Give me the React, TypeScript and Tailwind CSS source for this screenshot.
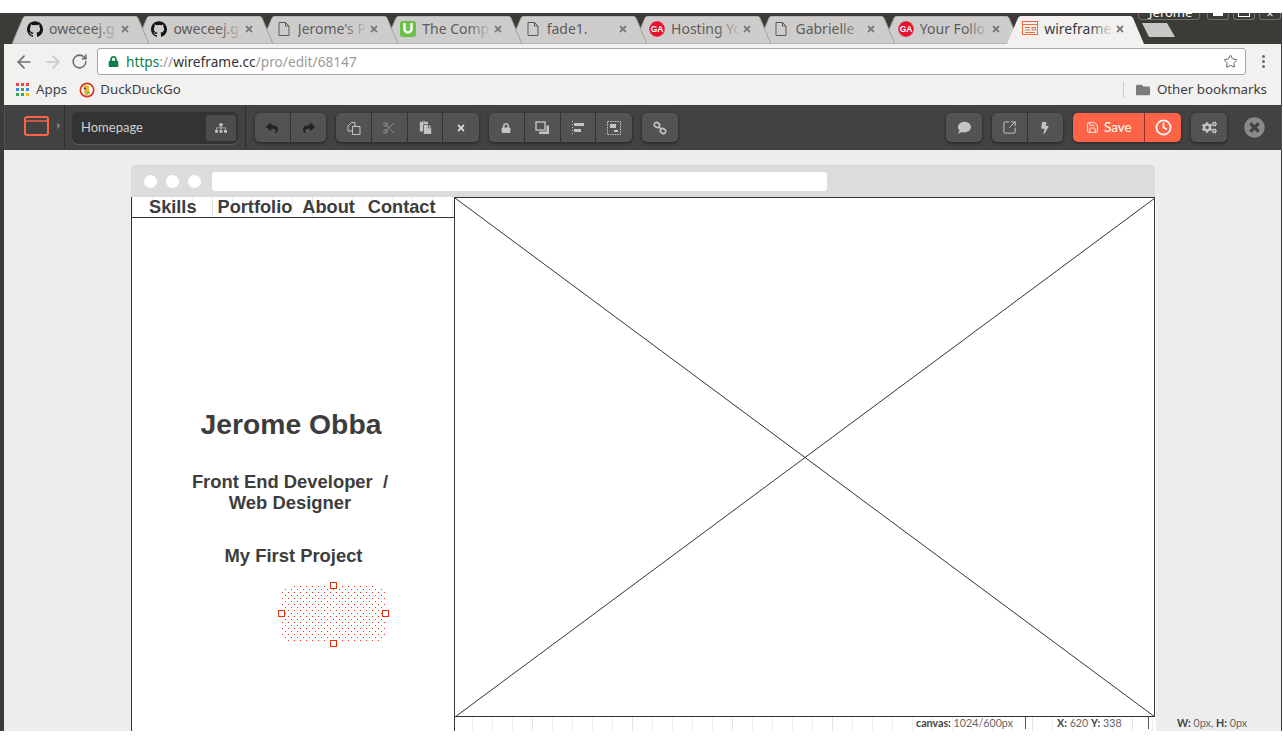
import React from "react";
import {
  ArrowLeft,
  ArrowRight,
  RotateCw,
  Star,
  Scissors,
  SquareArrowOutUpRight,
  Save,
  Clock,
} from "lucide-react";
import {
  FaReply,
  FaShare,
  FaPaste,
  FaTimes,
  FaLock,
  FaSitemap,
  FaComment,
  FaBolt,
  FaCogs,
  FaTimesCircle,
  FaFolder,
  FaCaretRight,
} from "react-icons/fa";
import { SiGithub } from "react-icons/si";

const PageIcon = () => (
  <svg width="16" height="16" viewBox="0 0 16 16" fill="none" stroke="#5a5a5a" strokeWidth="1">
    <path d="M3 1.5h6.5l3.5 3.5v9.5H3z" />
    <path d="M9.5 1.5V5H13" />
  </svg>
);

const GaIcon = () => (
  <svg width="16" height="16" viewBox="0 0 16 16">
    <circle cx="8" cy="8" r="7.4" fill="#e8112d" stroke="#e8112d" strokeWidth="1.2" strokeDasharray="1 1" />
    <text x="8" y="11" fontSize="8.5" fontWeight="700" textAnchor="middle" fill="#fff" fontFamily="Liberation Sans, sans-serif">
      GA
    </text>
  </svg>
);

const UptimeIcon = () => (
  <div className="w-4 h-4 rounded-[3px] bg-[#6cc04a] flex items-center justify-center">
    <svg width="10" height="11" viewBox="0 0 10 11" fill="none" stroke="#fff" strokeWidth="2.4">
      <path d="M1.5 0v6a3.5 3.5 0 0 0 7 0V0" />
    </svg>
  </div>
);

const WireframeIcon = () => (
  <svg width="16" height="15" viewBox="0 0 16 15" fill="none" stroke="#f0683c" strokeWidth="1">
    <rect x="0.5" y="0.5" width="15" height="13" />
    <path d="M0.5 3.5h15M3 6.5h5M3 9h5M3 11.5h10M10 6.5h3.5v2.5H10z" />
  </svg>
);

const tabs = [
  { title: "oweceej.g", icon: <SiGithub size={16} color="#161514" /> },
  { title: "oweceej.g", icon: <SiGithub size={16} color="#161514" /> },
  { title: "Jerome's P", icon: <PageIcon /> },
  { title: "The Comp", icon: <UptimeIcon /> },
  { title: "fade1.", icon: <PageIcon /> },
  { title: "Hosting Yo", icon: <GaIcon /> },
  { title: "Gabrielle", icon: <PageIcon /> },
  { title: "Your Follo", icon: <GaIcon /> },
  { title: "wireframe", icon: <WireframeIcon />, active: true },
];

const Tab = ({ title, icon, active, z }: { title: string; icon: React.ReactNode; active?: boolean; z: number }) => (
  <div
    className="relative w-[137px] h-[28px] shrink-0 -mr-[12.6px] flex items-center pl-[15px] pr-[19px] pb-[3px]"
    style={{ zIndex: z }}
  >
    <svg width="137" height="28" viewBox="0 0 137 28" className="absolute left-0 top-0">
      <path
        d="M0 28 L11 2 Q12 0 14 0 H123 Q125 0 126 2 L137 28 Z"
        fill={active ? "#f2f1f0" : "#cfcdcb"}
        stroke={active ? "none" : "#a3a19f"}
      />
    </svg>
    <div className="relative w-4 shrink-0 flex justify-center">{icon}</div>
    <div className={`relative ml-[6px] w-[70px] overflow-hidden whitespace-nowrap text-[14px] ${active ? "text-[#3c3c3c]" : "text-[#5c5c5c]"}`}>
      {title}
      <div className={`absolute right-0 top-0 bottom-0 w-6 bg-linear-to-r from-transparent ${active ? "to-[#f2f1f0]" : "to-[#cfcdcb]"}`} />
    </div>
    <FaTimes className="relative ml-auto text-[#777]" size={10} />
  </div>
);

const WinButton = ({ children }: { children?: React.ReactNode }) => (
  <div className="w-[22px] h-[7px] border border-t-0 border-[#74726d] rounded-b-[3px] flex justify-center overflow-hidden">
    {children}
  </div>
);

const TabStrip = () => (
  <div className="relative h-[31px] bg-[#3c3b37] pt-[3px] pl-[12px] flex overflow-hidden">
    {tabs.map((t, i) => (
      <Tab key={i} title={t.title} icon={t.icon} active={t.active} z={t.active ? 20 : 10 - i} />
    ))}
    <svg width="34" height="15" viewBox="0 0 34 15" className="ml-[10px] mt-[7px] shrink-0">
      <path d="M0 0 H25 L33 14 H7 Z" fill="#c9c7c5" />
    </svg>
    <div className="absolute top-0 right-0 flex gap-[4px] z-30">
      <div className="w-[62px] h-[7px] mr-[3px] border border-t-0 border-[#74726d] rounded-b-[4px] overflow-hidden relative">
        <span className="absolute left-[10px] -top-[10px] text-[13px] text-white font-['Noto_Sans',sans-serif]">Jerome</span>
      </div>
      <WinButton><div className="w-[10px] h-[3px] bg-white" /></WinButton>
      <WinButton><div className="w-[12px] h-[4px] border border-t-0 border-white" /></WinButton>
      <WinButton><span className="text-white text-[12px] leading-[1px]">×</span></WinButton>
    </div>
  </div>
);

const AppsIcon = () => (
  <div className="grid grid-cols-3 gap-[2px] w-[13px]">
    {["#e8453c", "#e8453c", "#e8453c", "#4285f4", "#34a853", "#4285f4", "#34a853", "#34a853", "#fbbc05"].map((c, i) => (
      <div key={i} className="w-[3px] h-[3px]" style={{ backgroundColor: c }} />
    ))}
  </div>
);

const DuckIcon = () => (
  <svg width="16" height="16" viewBox="0 0 16 16">
    <circle cx="8" cy="8" r="7.5" fill="#d8341f" />
    <circle cx="8" cy="8" r="5.8" fill="#fff" />
    <path d="M4 4.5 Q7 2.5 10 4 L10.5 11 L8 14 L5.5 12z" fill="#f2b33d" />
    <circle cx="6" cy="6.5" r="1" fill="#2d4f8e" />
    <path d="M7 10h4v1.5H7z" fill="#67bd46" />
  </svg>
);

const BrowserChrome = () => (
  <div className="bg-[#f2f1f0] font-['Noto_Sans',sans-serif]">
    <div className="h-[32px] flex items-center pt-[3px] pl-[10px] pr-[16px]">
      <ArrowLeft size={20} color="#6d6d6d" strokeWidth={2} />
      <ArrowRight size={20} color="#c8c8c8" strokeWidth={2} className="ml-[9px]" />
      <RotateCw size={17} color="#6d6d6d" strokeWidth={2.2} className="ml-[8px]" />
      <div className="ml-[9px] w-[1149px] h-[27px] bg-white border border-[#a9a7a5] rounded-[3px] flex items-center pl-[10px] pr-[7px]">
        <FaLock size={11} color="#0b8043" />
        <div className="ml-[7px] text-[13.7px] whitespace-nowrap pt-px">
          <span className="text-[#0b8043]">https</span>
          <span className="text-[#9a9a9a]">://</span>
          <span className="text-[#333]">wireframe.cc</span>
          <span className="text-[#9a9a9a]">/pro/edit/68147</span>
        </div>
        <Star size={15} color="#5f5f5f" strokeWidth={1.6} className="ml-auto" />
      </div>
      <div className="ml-auto flex flex-col gap-[2px]">
        <div className="w-[3px] h-[3px] rounded-full bg-[#6d6d6d]" />
        <div className="w-[3px] h-[3px] rounded-full bg-[#6d6d6d]" />
        <div className="w-[3px] h-[3px] rounded-full bg-[#6d6d6d]" />
      </div>
    </div>
    <div className="h-[29px] flex items-center pb-[2px] pl-[12px] pr-[14px] text-[13.3px] text-[#3b3f46]">
      <AppsIcon />
      <span className="ml-[7px]">Apps</span>
      <div className="ml-[12px]"><DuckIcon /></div>
      <span className="ml-[5px]">DuckDuckGo</span>
      <div className="ml-auto w-px h-[16px] bg-[#c9c9c9]" />
      <FaFolder size={14} color="#7b7b7b" className="ml-[12px]" />
      <span className="ml-[7px]">Other bookmarks</span>
    </div>
  </div>
);

const ToolGroup = ({ children }: { children: React.ReactNode }) => (
  <div className="flex h-[29px] rounded-[5px] bg-[#535353] shadow-[0_1px_2px_1px_#2f2f2f] divide-x divide-[#333]">
    {children}
  </div>
);

const ToolButton = ({ children }: { children: React.ReactNode }) => (
  <div className="w-[35.7px] flex items-center justify-center text-[#c4c4c4]">{children}</div>
);

const CopyIcon = () => (
  <svg width="14" height="14" viewBox="0 0 14 14" fill="none" stroke="#c4c4c4" strokeWidth="1">
    <path d="M1 5l3.5-3.5H8v4M1 5v5h4" />
    <path d="M5.5 5.5h7.5v8H5.5z" />
  </svg>
);

const FrontIcon = () => (
  <svg width="15" height="14" viewBox="0 0 15 14">
    <rect x="1" y="1" width="9" height="8" fill="none" stroke="#c4c4c4" strokeWidth="1.4" />
    <path d="M11.5 4.5H14V13H4V10.5H11.5z" fill="#c4c4c4" />
  </svg>
);

const AlignIcon = () => (
  <svg width="12" height="14" viewBox="0 0 12 14" fill="#c4c4c4">
    <path d="M0 0h1v1H0zM0 3h1v1H0zM0 6h1v1H0zM0 9h1v1H0zM0 12h1v1H0z" />
    <path d="M2 2h10v3H2zM2 8h7v3H2z" />
  </svg>
);

const GroupIcon = () => (
  <svg width="14" height="14" viewBox="0 0 14 14" fill="#c4c4c4">
    <rect x="0.5" y="0.5" width="13" height="13" fill="none" stroke="#c4c4c4" strokeDasharray="1.5 1" />
    <path d="M3 3h6v4H3zM7 9h4v2H7z" />
  </svg>
);

const LinkIcon = () => (
  <svg width="14" height="14" viewBox="0 0 14 14" fill="none" stroke="#c4c4c4" strokeWidth="1.6">
    <ellipse cx="4" cy="4" rx="2.8" ry="2.3" transform="rotate(30 4 4)" />
    <ellipse cx="10" cy="10" rx="2.8" ry="2.3" transform="rotate(30 10 10)" />
    <path d="M6 6l2 2" />
  </svg>
);

const AppToolbar = () => (
  <div className="h-[45px] bg-[#424242] flex items-center ml-px font-['Lato',sans-serif] shadow-[0_1px_1px_#bbb]">
    <div className="w-[60px] h-[42px] self-start flex items-center pl-[19px] border-r border-[#2c2c2c]">
      <svg width="25" height="20" viewBox="0 0 25 20" fill="none" stroke="#ff6347" strokeWidth="2" className="shrink-0">
        <rect x="1" y="1" width="23" height="18" rx="2" />
        <path d="M1 5h23" strokeWidth="1.4" />
      </svg>
      <FaCaretRight size={10} color="#7c7c7c" className="ml-[5px] shrink-0" />
    </div>
    <div className="ml-[7px] w-[166px] h-[32px] rounded-[6px] bg-[#333] shadow-[0_1px_0_#5a5a5a] flex items-center pl-[9px] pr-[2px]">
      <span className="text-[13px] text-[#cfcfcf]">Homepage</span>
      <div className="ml-auto w-[30px] h-[26px] bg-[#4c4c4c] rounded-[3px] flex items-center justify-center">
        <FaSitemap size={12} color="#bdbdbd" />
      </div>
    </div>
    <div className="ml-[7px] h-[42px] self-start w-px bg-[#2c2c2c]" />
    <div className="ml-[9px] flex gap-[10px]">
      <ToolGroup>
        <ToolButton><FaReply size={12} color="#222" /></ToolButton>
        <ToolButton><FaShare size={12} color="#222" /></ToolButton>
      </ToolGroup>
      <ToolGroup>
        <ToolButton><CopyIcon /></ToolButton>
        <ToolButton><Scissors size={14} strokeWidth={1.2} color="#aaa" /></ToolButton>
        <ToolButton><FaPaste size={13} /></ToolButton>
        <ToolButton><FaTimes size={10} color="#ddd" /></ToolButton>
      </ToolGroup>
      <ToolGroup>
        <ToolButton><FaLock size={10} /></ToolButton>
        <ToolButton><FrontIcon /></ToolButton>
        <ToolButton><AlignIcon /></ToolButton>
        <ToolButton><GroupIcon /></ToolButton>
      </ToolGroup>
      <ToolGroup>
        <ToolButton><LinkIcon /></ToolButton>
      </ToolGroup>
    </div>
    <div className="ml-auto flex items-center gap-[10px] pr-[16px]">
      <ToolGroup>
        <ToolButton><FaComment size={13} /></ToolButton>
      </ToolGroup>
      <ToolGroup>
        <ToolButton><SquareArrowOutUpRight size={15} strokeWidth={1.6} /></ToolButton>
        <ToolButton><FaBolt size={12} /></ToolButton>
      </ToolGroup>
      <div className="flex h-[29px] rounded-[5px] bg-[#ff6347] shadow-[0_1px_1px_1px_#333] text-white">
        <div className="w-[72px] flex items-center justify-center gap-[5px] text-[13.5px] border-r border-[#8a3322]">
          <Save size={13} strokeWidth={1.6} />
          Save
        </div>
        <div className="w-[36px] flex items-center justify-center">
          <Clock size={17} strokeWidth={2.4} />
        </div>
      </div>
      <ToolGroup>
        <ToolButton><FaCogs size={15} /></ToolButton>
      </ToolGroup>
      <FaTimesCircle size={21} color="#8a8a8a" className="ml-[7px]" />
    </div>
  </div>
);

const gridLines =
  "bg-[linear-gradient(to_right,#e2e2e2_1px,transparent_1px),linear-gradient(to_right,#f0f0f0_1px,transparent_1px)] bg-[length:100px_100%,20px_100%]";

const navItems = [
  { label: "Skills", className: "ml-[17px]" },
  { label: "Portfolio", className: "ml-[21px]" },
  { label: "About", className: "ml-[10px]" },
  { label: "Contact", className: "ml-[13px]" },
];

const ShapeHandle = ({ className }: { className: string }) => (
  <div className={`absolute w-[7px] h-[7px] bg-white border border-[#e8300d] ${className}`} />
);

const DottedShape = () => (
  <div className="relative w-[105px] h-[57px] ml-[149px] mt-[20px]">
    <svg width="105" height="57" viewBox="0 0 105 57" shapeRendering="crispEdges">
      <defs>
        <pattern id="dots" width="6" height="6" patternUnits="userSpaceOnUse" x="1" y="0">
          <rect x="0" y="0" width="1" height="1" fill="#ff2a00" />
          <rect x="3" y="3" width="1" height="1" fill="#ff2a00" />
        </pattern>
      </defs>
      <rect x="0" y="0" width="105" height="57" rx="12" fill="url(#dots)" />
    </svg>
    <ShapeHandle className="left-[49px] -top-[4px]" />
    <ShapeHandle className="-left-[3px] top-[24px]" />
    <ShapeHandle className="-right-[3px] top-[24px]" />
    <ShapeHandle className="left-[49px] -bottom-[4px]" />
  </div>
);

const Editor = () => (
  <div className="flex-1 bg-[#ededed] pt-[15px] pl-[127px] flex font-['Liberation_Sans',sans-serif]">
    <div className="w-[1025px]">
      <div className="w-[1024px] h-[32px] bg-[#dcdcdc] border-t border-[#d2d2d2] rounded-t-[5px] flex items-center pl-[13px] pb-px">
        <div className="w-[13px] h-[13px] rounded-full bg-white" />
        <div className="w-[13px] h-[13px] rounded-full bg-white ml-[9px]" />
        <div className="w-[13px] h-[13px] rounded-full bg-white ml-[9px]" />
        <div className="ml-[11px] w-[615px] h-[19px] rounded-[3px] bg-white" />
      </div>
      <div className="flex h-[534px] bg-white">
        <div className="w-[323px] border-l border-[#333] text-[#3d3d3d] font-bold text-center">
          <div className={`h-[21px] border-b border-[#333] flex text-[18.2px] leading-[20px] ${gridLines} bg-[position:80px_0,20px_0]`}>
            {navItems.map((n) => (
              <span key={n.label} className={n.className}>{n.label}</span>
            ))}
          </div>
          <div className="pr-[4px]">
            <h1 className="mt-[189px] text-[28.3px] leading-[34px] font-bold">Jerome Obba</h1>
            <p className="mt-[30px] text-[18.4px] leading-[21px] whitespace-pre pr-[2px]">
              {"Front End Developer  /\nWeb Designer"}
            </p>
            <p className="mt-[32px] text-[18.4px] leading-[21px] pl-[5px]">My First Project</p>
          </div>
          <DottedShape />
        </div>
        <div className="w-[701px] border-l border-[#333]">
          <div className="h-[520px] border-t border-r border-b border-[#333]">
            <svg width="700" height="519" viewBox="0 0 700 519" className="block">
              <path d="M0 0L700 519M700 0L0 519" stroke="#333" strokeWidth="1" fill="none" />
            </svg>
          </div>
          <div className={`h-[14px] flex items-start text-[10.7px] text-[#666] font-['Lato',sans-serif] whitespace-nowrap ${gridLines} bg-[position:77px_0,17px_0]`}>
            <span className="ml-[461px] w-[110px] h-[12px] border-r border-[#555] leading-[11px]"><b className="text-[#444]">canvas:</b> 1024/600px</span>
            <span className="ml-[31px] w-[92px] h-[12px] border-r border-[#555] leading-[11px]"><b className="text-[#444]">X:</b> 620 <b className="text-[#444]">Y:</b> 338</span>
          </div>
        </div>
      </div>
    </div>
    <div className="self-end ml-[21px] h-[14px] flex items-start text-[10.7px] leading-[11px] text-[#666] font-['Lato',sans-serif] whitespace-nowrap">
      <span><b className="text-[#444]">W:</b> 0px, <b className="text-[#444]">H:</b> 0px</span>
    </div>
  </div>
);

export default function App() {
  return (
    <div className="w-[1283px] h-[744px] bg-white pt-[13px] overflow-hidden">
      <div className="w-[1282px] h-[718px] flex flex-col bg-[#3c3b37] border-r border-[#3c3b37] border-l-4 font-['Noto_Sans',sans-serif]">
        <div className="-ml-1 font-['Noto_Sans',sans-serif]">
          <TabStrip />
        </div>
        <BrowserChrome />
        <AppToolbar />
        <Editor />
      </div>
    </div>
  );
}
